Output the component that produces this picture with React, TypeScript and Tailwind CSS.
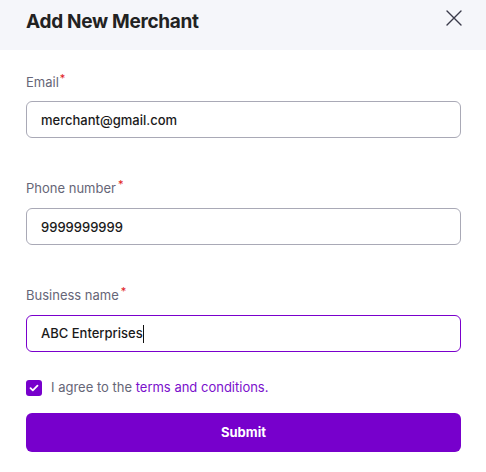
import React from "react";

export default function App() {
  return (
    <div className="w-[486px] h-[472px] bg-white font-['Inter',sans-serif] overflow-hidden">
      {/* Header */}
      <div className="h-[50px] bg-[#f5f6fa] flex items-start justify-between pl-[26px] pr-[24px]">
        <h1 className="pt-[8px] text-[19px] leading-[28px] font-bold text-[#222222] tracking-[-0.3px]">Add New Merchant</h1>
        <svg className="mt-[10px]" width="16" height="16" viewBox="0 0 16 16" fill="none" stroke="#3a3a4a" strokeWidth="1.4" strokeLinecap="round">
          <path d="M1 1l14 14M15 1L1 15" />
        </svg>
      </div>

      <div className="pl-[26px] pr-[25px] pt-[22px]">
        <label className="block text-[13px] text-[#666677] h-[20px] mt-[1px]">
          Email<span className="text-[#e02020] relative -top-[5px] text-[11px] ml-[1px]">*</span>
        </label>
        <input
          readOnly
          value="merchant@gmail.com"
          className="mt-[8px] w-full h-[37px] rounded-[6px] border border-[#a9a9b6] px-[14px] text-[13px] font-medium text-[#1a1a1a] outline-none"
        />

        <label className="block text-[13px] text-[#666677] h-[20px] mt-[41px]">
          Phone number<span className="text-[#e02020] relative -top-[5px] text-[11px] ml-[2px]">*</span>
        </label>
        <input
          readOnly
          value="9999999999"
          className="mt-[9px] w-full h-[37px] rounded-[6px] border border-[#a9a9b6] px-[14px] text-[13px] font-medium text-[#1a1a1a] outline-none"
        />

        <label className="block text-[13px] text-[#666677] h-[20px] mt-[41px]">
          Business name<span className="text-[#e02020] relative -top-[5px] text-[11px] ml-[2px]">*</span>
        </label>
        <div className="mt-[9px] w-full h-[37px] rounded-[6px] border border-[#7a00cc] px-[14px] text-[13px] font-medium text-[#1a1a1a] flex items-center">
          ABC Enterprises<span className="inline-block w-px h-[18px] bg-[#111111]"></span>
        </div>

        <div className="mt-[28px] flex items-center gap-[9px] h-[16px]">
          <span className="w-[16px] h-[16px] rounded-[3px] bg-[#7700cc] flex items-center justify-center">
            <svg width="10" height="10" viewBox="0 0 10 10" fill="none" stroke="#ffffff" strokeWidth="1.8" strokeLinecap="round" strokeLinejoin="round">
              <path d="M1.5 5.2l2.3 2.2L8.5 2.6" />
            </svg>
          </span>
          <span className="text-[13px] text-[#666677]">
            I agree to the <span className="text-[#7a0fcc]">terms and conditions.</span>
          </span>
        </div>

        <button className="mt-[17px] w-full h-[39px] rounded-[6px] bg-[#7700cc] text-white text-[13px] font-bold">
          Submit
        </button>
      </div>
    </div>
  );
}
